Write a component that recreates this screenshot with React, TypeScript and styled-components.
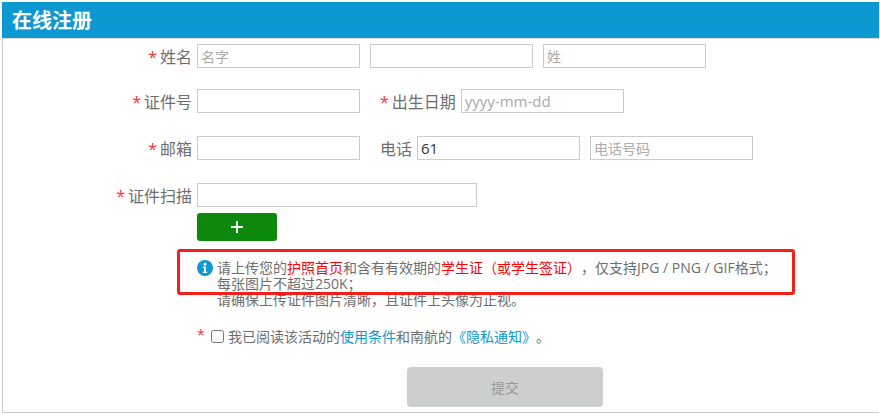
import React from "react";
import styled, { createGlobalStyle } from "styled-components";

const FONT = `"Open Sans", "Noto Sans CJK SC", sans-serif`;

/* Styling */
const GlobalStyle = createGlobalStyle`
    html, body {
        margin: 0;
        padding: 0;
        background: #fff;
    }
    body {
        font-family: ${FONT};
        overflow: hidden;
    }
    * {
        box-sizing: border-box;
    }
`;

const Page = styled.div`
    width: 880px;
    height: 414px;
    padding: 2px 1px 0 2px;
`;

const TitleBar = styled.h1`
    margin: 0;
    height: 36px;
    padding-left: 10px;
    background: #0e98d2;
    color: #fff;
    font-size: 20px;
    font-weight: 700;
    line-height: 37px;
`;

const Panel = styled.div`
    height: 375px;
    padding-top: 5px;
    border-left: 1px solid #ccc;
    border-bottom: 1px solid #ccc;
    border-top: 1px solid #ddd;
`;

const Row = styled.div<{ $bottom: number }>`
    display: flex;
    align-items: center;
    height: 24px;
    margin-bottom: ${(p) => p.$bottom}px;
    color: #6e6e6e;
    font-size: 16px;
`;

const MainLabel = styled.label`
    flex: none;
    width: 194px;
    padding-right: 5px;
    text-align: right;
    white-space: nowrap;
`;

const SideLabel = styled.label`
    flex: none;
    margin-left: 20px;
    padding-right: 5px;
    white-space: nowrap;
`;

const Star = styled.span`
    margin-right: 3px;
    color: #f33;
    font-size: 16px;
`;

const Input = styled.input<{ $width?: number; $gap?: number; $size?: number }>`
    flex: none;
    width: ${(p) => p.$width ?? 163}px;
    height: 24px;
    margin: 0 0 0 ${(p) => p.$gap ?? 0}px;
    padding: 0 3px;
    border: 1px solid #ccc;
    border-radius: 0;
    outline: none;
    background: #fff;
    color: #333;
    font-family: ${FONT};
    font-size: ${(p) => p.$size ?? 14}px;

    &::placeholder {
        color: #aaa;
        opacity: 1;
    }
`;

const AddButton = styled.button`
    display: flex;
    align-items: center;
    justify-content: center;
    width: 80px;
    height: 28px;
    margin: 0 0 19px 194px;
    padding: 0;
    border: none;
    border-radius: 3px;
    background: #0d880f;
`;

const Notice = styled.div`
    position: relative;
    margin-left: 194px;
    color: #6e6e6e;
    font-size: 14px;
    line-height: 16px;
`;

const NoticeLine = styled.div`
    display: flex;
    align-items: center;
    height: 16px;
    padding-left: 20px;
    white-space: nowrap;
`;

const InfoIcon = styled.svg`
    position: absolute;
    left: 0;
    top: 0;
`;

const Red = styled.span`
    color: #f00;
`;

const RedFrame = styled.div`
    position: absolute;
    left: -20px;
    top: -11px;
    width: 618px;
    height: 46px;
    border: 3px solid #f5201b;
    border-radius: 3px;
`;

const Agreement = styled.div`
    position: relative;
    display: flex;
    align-items: center;
    height: 20px;
    margin: 18px 0 21px 194px;
    color: #6e6e6e;
    font-size: 14px;
    white-space: nowrap;
`;

const AgreeStar = styled(Star)`
    position: absolute;
    left: 0;
    top: -1px;
    font-size: 14px;
`;

const Check = styled.input`
    appearance: none;
    width: 13px;
    height: 13px;
    margin: 0 4px 0 14px;
    border: 1px solid #767676;
    border-radius: 2.5px;
    background: #fff;
`;

const TextLink = styled.a`
    color: #0e98d2;
    text-decoration: none;
`;

const Actions = styled.div`
    display: flex;
    padding-left: 404px;
`;

const SubmitButton = styled.button`
    width: 196px;
    height: 40px;
    border: none;
    border-radius: 4px;
    background: #cdcfcf;
    color: #999;
    font-family: ${FONT};
    font-size: 14px;
`;

export default function App() {
    return (
        <Page>
            <GlobalStyle />
            <TitleBar>在线注册</TitleBar>
            <Panel>
                <Row $bottom={21}>
                    <MainLabel><Star>*</Star>姓名</MainLabel>
                    <Input placeholder="名字" />
                    <Input $gap={10} />
                    <Input $gap={10} placeholder="姓" />
                </Row>
                <Row $bottom={23}>
                    <MainLabel><Star>*</Star>证件号</MainLabel>
                    <Input />
                    <SideLabel><Star>*</Star>出生日期</SideLabel>
                    <Input $size={15} placeholder="yyyy-mm-dd" />
                </Row>
                <Row $bottom={23}>
                    <MainLabel><Star>*</Star>邮箱</MainLabel>
                    <Input />
                    <SideLabel>电话</SideLabel>
                    <Input $size={15} defaultValue="61" />
                    <Input $gap={10} placeholder="电话号码" />
                </Row>
                <Row $bottom={6}>
                    <MainLabel><Star>*</Star>证件扫描</MainLabel>
                    <Input $width={280} />
                </Row>
                <AddButton aria-label="添加">
                    <svg width="12" height="12" viewBox="0 0 12 12">
                        <path d="M6 0v12M0 6h12" stroke="#fff" strokeWidth="2" />
                    </svg>
                </AddButton>
                <Notice>
                    <InfoIcon width="16" height="16" viewBox="0 0 16 16">
                        <circle cx="8" cy="8" r="8" fill="#0e98d2" />
                        <circle cx="8" cy="4.2" r="1.4" fill="#fff" />
                        <path d="M6 6.6h3v5.2h1.2v1.3H5.8v-1.3H7V7.9H6z" fill="#fff" />
                    </InfoIcon>
                    <NoticeLine>
                        请上传您的<Red>护照首页</Red>和含有有效期的<Red>学生证（或学生签证）</Red>，仅支持JPG / PNG / GIF格式；
                    </NoticeLine>
                    <NoticeLine>每张图片不超过250K；</NoticeLine>
                    <NoticeLine>请确保上传证件图片清晰，且证件上头像为正视。</NoticeLine>
                    <RedFrame />
                </Notice>
                <Agreement>
                    <AgreeStar>*</AgreeStar>
                    <Check type="checkbox" />
                    我已阅读该活动的<TextLink>使用条件</TextLink>和南航的<TextLink>《隐私通知》</TextLink>。
                </Agreement>
                <Actions>
                    <SubmitButton>提交</SubmitButton>
                </Actions>
            </Panel>
        </Page>
    );
}
